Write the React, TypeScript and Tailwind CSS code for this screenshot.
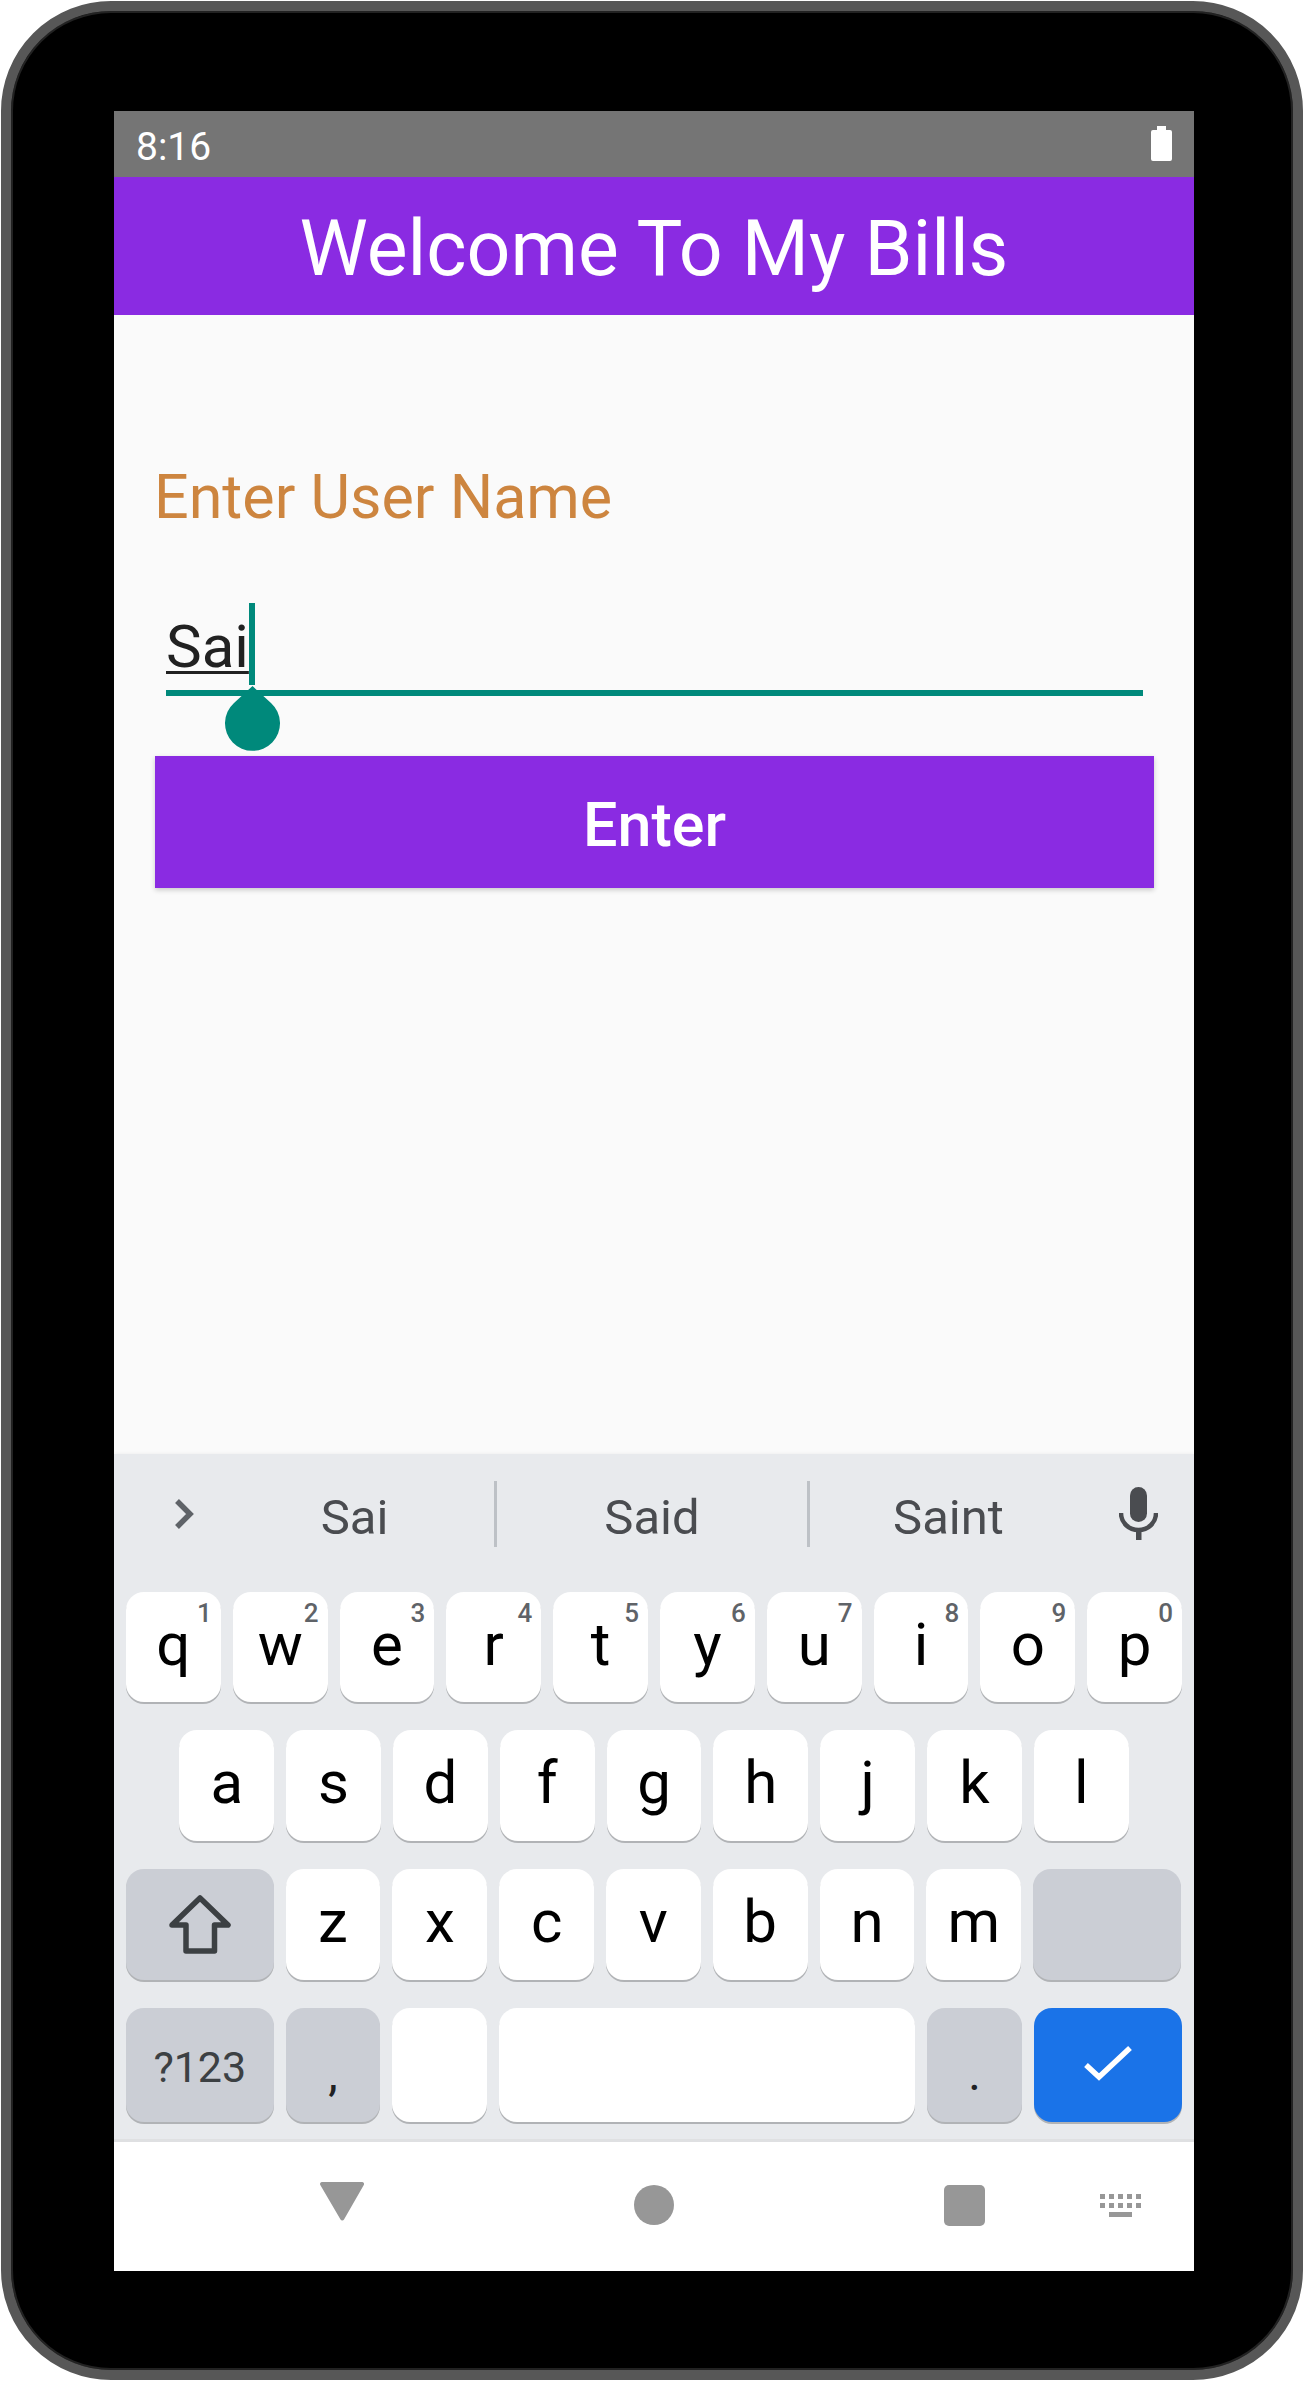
const row1 = [
  ["q", "1"],
  ["w", "2"],
  ["e", "3"],
  ["r", "4"],
  ["t", "5"],
  ["y", "6"],
  ["u", "7"],
  ["i", "8"],
  ["o", "9"],
  ["p", "0"],
];
const row2 = ["a", "s", "d", "f", "g", "h", "j", "k", "l"];
const row3 = ["z", "x", "c", "v", "b", "n", "m"];

const Key = ({ label, hint }: { label: string; hint?: string }) => (
  <div className="relative flex h-full w-[94.8px] justify-center rounded-[18px] bg-white pt-[18px] text-[60px] leading-[70px] text-black shadow-[0_2px_0_#b1b3b6]">
    {label}
    {hint && (
      <span className="absolute top-[6px] right-[9px] text-[26px] leading-[30px] font-medium text-[#5f6368]">
        {hint}
      </span>
    )}
  </div>
);

const Suggestion = ({ text, width }: { text: string; width: string }) => (
  <div className={`${width} pt-[35px] text-center text-[49px] leading-[57px] text-[#4a4c50]`}>
    {text}
  </div>
);

export default function App() {
  return (
    <div className="h-[2381px] w-[1304px] bg-white p-px font-['Roboto',sans-serif]">
      <div className="h-full w-full rounded-[110px] border-[10px] border-[#575757] bg-black pt-[100px] pl-[103px] shadow-[inset_0_0_0_2px_#222222]">
        <div className="flex h-[2160px] w-[1080px] flex-col">
          <div className="flex h-[66px] shrink-0 items-center justify-between bg-[#757575] pr-[22px] pl-[22px]">
            <span className="pt-[5px] text-[39px] leading-[46px] text-white">8:16</span>
            <svg width="21" height="35" viewBox="0 0 21 35" className="mt-[-1px]">
              <path d="M6 0h9v4h4a2 2 0 0 1 2 2v27a2 2 0 0 1-2 2H2a2 2 0 0 1-2-2V6a2 2 0 0 1 2-2h4z" fill="#ffffff" />
            </svg>
          </div>

          <div className="flex h-[138px] shrink-0 items-center justify-center bg-[#8a2be2] pt-[6px] text-[77px] leading-[90px] text-white">
            Welcome To My Bills
          </div>

          <div className="flex-1 bg-[#fafafa]">
            <div className="mt-[147px] ml-[40px] text-[61px] leading-[70px] text-[#cd853f]">
              Enter User Name
            </div>
            <div className="relative mt-[80px] ml-[52px] w-[977px] border-b-[6px] border-[#00897b] pb-[8px] text-[60px] leading-[70px] text-[#212121]">
              <span className="underline decoration-[3px] underline-offset-[4px] [text-decoration-skip-ink:none]">
                Sai
              </span>
              <div className="absolute top-[-9px] left-[83px] h-[82px] w-[6px] bg-[#00897b]" />
              <svg width="55" height="65" viewBox="0 0 55 65" className="absolute top-[74px] left-[58.5px]">
                <path d="M27.5 0L46 17A27.5 27.5 0 1 1 9 17Z" fill="#00897b" />
              </svg>
            </div>
            <div className="mt-[60px] ml-[41px] flex h-[132px] w-[999px] items-center justify-center bg-[#8a2be2] pt-[6px] text-[61px] leading-[70px] font-medium text-white shadow-[0_2px_5px_rgba(0,0,0,0.2)]">
              Enter
            </div>
          </div>

          <div className="h-[688px] shrink-0 border-b-[3px] border-[#dfe0e2] bg-[#e8eaed] shadow-[0_-1px_3px_rgba(0,0,0,0.04)]">
            <div className="flex h-[138px]">
              <div className="w-[101px] pt-[44px] pl-[60px]">
                <svg width="20" height="32" viewBox="0 0 20 32">
                  <path d="M3 3L16 16L3 29" fill="none" stroke="#5f6368" strokeWidth="5.5" />
                </svg>
              </div>
              <Suggestion text="Sai" width="w-[279px]" />
              <div className="mt-[27px] h-[66px] w-[3px] bg-[#bdc1c6]" />
              <Suggestion text="Said" width="w-[310px]" />
              <div className="mt-[27px] h-[66px] w-[3px] bg-[#bdc1c6]" />
              <Suggestion text="Saint" width="w-[277px]" />
              <div className="pt-[33px] pl-[32px]">
                <svg width="39" height="53" viewBox="0 0 39 53">
                  <rect x="11" y="0" width="17" height="35" rx="8.5" fill="#4a4c50" />
                  <path d="M2 26C2 36 10 43 19.5 43S37 36 37 26" fill="none" stroke="#4a4c50" strokeWidth="4.5" />
                  <rect x="17" y="42" width="5.5" height="11" fill="#4a4c50" />
                </svg>
              </div>
            </div>

            <div className="flex flex-col gap-[26px] px-[12px]">
              <div className="flex h-[112px] gap-[12px] pb-[2px]">
                {row1.map(([l, n]) => (
                  <Key key={l} label={l} hint={n} />
                ))}
              </div>
              <div className="flex h-[113px] justify-center gap-[12px] pb-[2px]">
                {row2.map((l) => (
                  <Key key={l} label={l} />
                ))}
              </div>
              <div className="flex h-[113px] gap-[12px] pb-[2px]">
                <div className="flex w-[147.6px] items-center justify-center rounded-[18px] bg-[#cbced5] shadow-[0_2px_0_#b1b3b6]">
                  <svg width="64" height="60" viewBox="0 0 64 60">
                    <path d="M32 3L60 30H46.5V56H18V30H4Z" fill="none" stroke="#3c4043" strokeWidth="5.5" strokeLinejoin="round" />
                  </svg>
                </div>
                {row3.map((l) => (
                  <Key key={l} label={l} />
                ))}
                <div className="w-[147.6px] rounded-[18px] bg-[#cbced5] shadow-[0_2px_0_#b1b3b6]" />
              </div>
              <div className="flex h-[116px] gap-[12px] pb-[2px]">
                <div className="flex w-[147.6px] items-center justify-center rounded-[18px] bg-[#cbced5] pt-[4px] text-[43px] leading-[50px] text-[#3c4043] shadow-[0_2px_0_#b1b3b6]">
                  ?123
                </div>
                <div className="flex w-[94.8px] justify-center rounded-[18px] bg-[#cbced5] pt-[38px] text-[48px] leading-[56px] text-[#202124] shadow-[0_2px_0_#b1b3b6]">
                  ,
                </div>
                <div className="w-[94.8px] rounded-[18px] bg-white shadow-[0_2px_0_#b1b3b6]" />
                <div className="w-[416px] rounded-[18px] bg-white shadow-[0_2px_0_#b1b3b6]" />
                <div className="flex w-[94.8px] justify-center rounded-[18px] bg-[#cbced5] pt-[38px] text-[48px] leading-[56px] text-[#202124] shadow-[0_2px_0_#b1b3b6]">
                  .
                </div>
                <div className="flex w-[147.6px] items-center justify-center rounded-[18px] bg-[#1a73e8] shadow-[0_2px_0_#b1b3b6]">
                  <svg width="50" height="40" viewBox="0 0 50 40">
                    <path d="M3 20L16 32L47 3" fill="none" stroke="#ffffff" strokeWidth="5.5" />
                  </svg>
                </div>
              </div>
            </div>
          </div>

          <div className="flex h-[129px] shrink-0 items-center bg-white pb-[3px]">
            <svg width="44" height="39" viewBox="0 0 44 39" className="mb-[8px] ml-[206px]">
              <path d="M2 0H42A2 2 0 0 1 43.8 3L24 37.5A2 2 0 0 1 20.5 37.5L0.3 3A2 2 0 0 1 2 0Z" fill="#979797" />
            </svg>
            <div className="ml-[270px] h-[40px] w-[40px] rounded-full bg-[#979797]" />
            <div className="ml-[270px] h-[41px] w-[41px] rounded-[5px] bg-[#979797]" />
            <svg width="42" height="23" viewBox="0 0 42 23" className="ml-[115px]">
              <path
                d="M0 0h5v5H0zM9 0h5v5H9zM18 0h5v5h-5zM27 0h5v5h-5zM36 0h5v5h-5zM0 9h5v5H0zM9 9h5v5H9zM18 9h5v5h-5zM27 9h5v5h-5zM36 9h5v5h-5zM9 18h23v5H9z"
                fill="#979797"
              />
            </svg>
          </div>
        </div>
      </div>
    </div>
  );
}
